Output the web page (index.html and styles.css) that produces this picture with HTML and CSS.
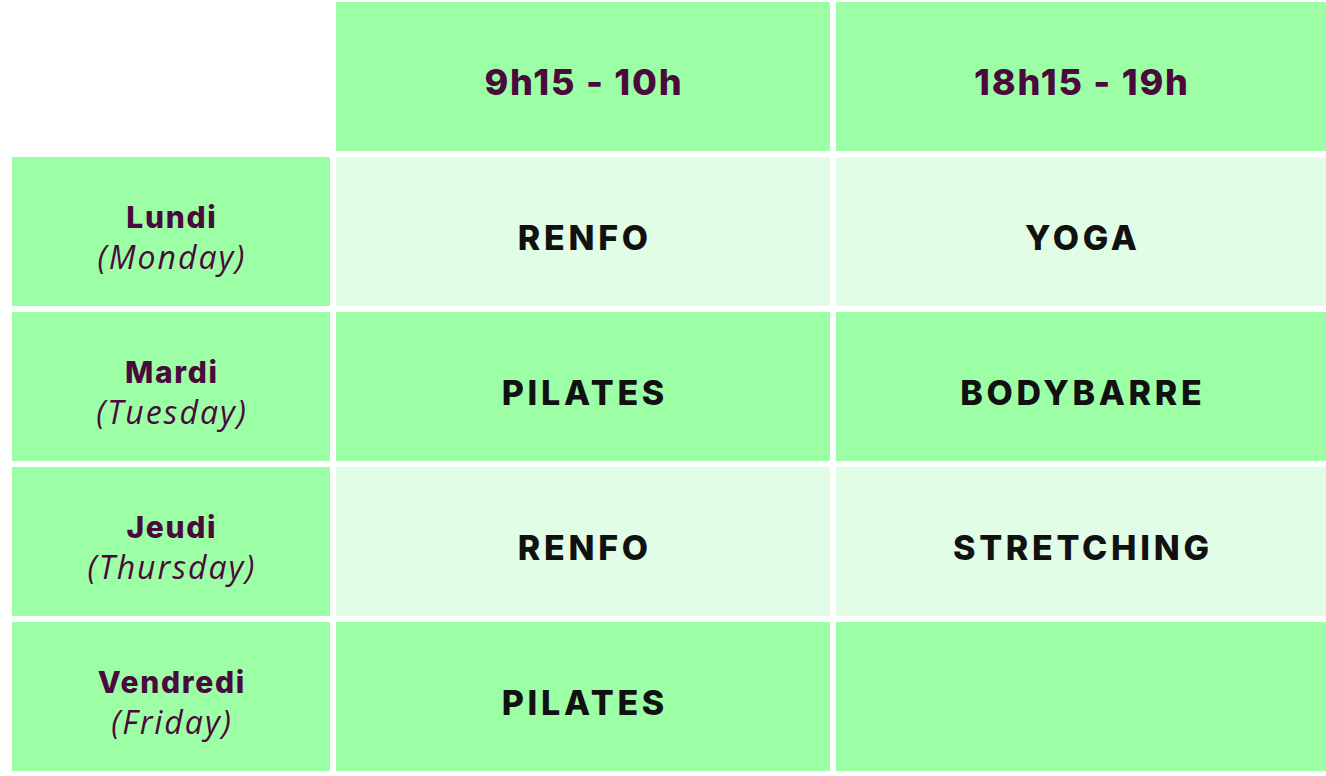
FILE: index.html
```html
<!DOCTYPE html>
<html lang="fr">
<head>
<meta charset="utf-8">
<title>Planning</title>
<link rel="stylesheet" href="styles.css">
</head>
<body>
<div class="schedule">
  <div class="cell empty"></div>
  <div class="cell head">9h15 - 10h</div>
  <div class="cell head">18h15 - 19h</div>

  <div class="cell day"><span class="fr">Lundi</span><span class="en">(Monday)</span></div>
  <div class="cell light act">RENFO</div>
  <div class="cell light act">YOGA</div>

  <div class="cell day"><span class="fr">Mardi</span><span class="en">(Tuesday)</span></div>
  <div class="cell act">PILATES</div>
  <div class="cell act">BODYBARRE</div>

  <div class="cell day"><span class="fr">Jeudi</span><span class="en">(Thursday)</span></div>
  <div class="cell light act">RENFO</div>
  <div class="cell light act">STRETCHING</div>

  <div class="cell day"><span class="fr">Vendredi</span><span class="en">(Friday)</span></div>
  <div class="cell act">PILATES</div>
  <div class="cell act"></div>
</div>
</body>
</html>
```
FILE: styles.css
```css
html, body {
  margin: 0;
  padding: 0;
  background: #ffffff;
}
body {
  width: 1326px;
  height: 776px;
  overflow: hidden;
  font-family: "Inter", "Liberation Sans", sans-serif;
}
.schedule {
  display: grid;
  grid-template-columns: 318px 494px 490px;
  grid-auto-rows: 149px;
  gap: 6px;
  padding: 2px 0 0 12px;
}
.cell {
  background: #9cffa6;
  display: flex;
  flex-direction: column;
  align-items: center;
  justify-content: center;
  text-align: center;
  box-sizing: border-box;
  padding-top: 11px;
}
.cell.empty {
  background: transparent;
}
.cell.light {
  background: #e2fde5;
}
.head {
  color: #4a0a3c;
  font-weight: 800;
  font-size: 36px;
  letter-spacing: 1.8px;
  padding-left: 1.8px;
}
.act {
  color: #111111;
  font-weight: 800;
  font-size: 34px;
  letter-spacing: 3.7px;
  padding-left: 3.7px;
}
.day {
  color: #4a0a3c;
  line-height: 40px;
}
.day .fr {
  font-weight: 800;
  font-size: 30px;
  letter-spacing: 1.7px;
  padding-left: 1.7px;
}
.day .en {
  font-family: "Open Sans", "Liberation Sans", sans-serif;
  font-style: italic;
  font-size: 32px;
  letter-spacing: 2px;
  padding-left: 2px;
}
```
